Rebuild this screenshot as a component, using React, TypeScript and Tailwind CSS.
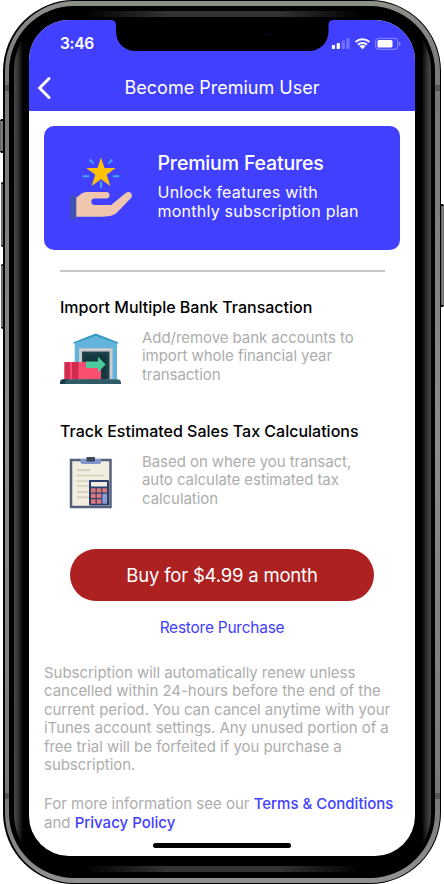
import type { ReactNode } from "react";

function SideButton({ className }: { className: string }) {
  return (
    <div
      className={`shrink-0 border-y-2 border-black bg-gradient-to-r from-[#555] via-[#858585] to-[#666] ${className}`}
    />
  );
}

function Sheen() {
  return <div className="h-[6px] w-[277px] shrink-0 bg-[linear-gradient(90deg,#000,#333_30%,#333_70%,#000)]" />;
}

function Notch() {
  return (
    <svg className="absolute left-[81px] top-0" width="224" height="32" viewBox="0 0 224 32">
      <path d="M0 0H224C220 0 218.500 1.500 218.500 6V11C218.500 23 210 31 199 31H26C14 31 6 23 6 11V6C6 1.500 4.500 0 0 0Z" fill="#000" />
      <path d="M156.500 13.500q-1.500 .5-1 2.500M159.500 13q1.500 .5 1 2.500" stroke="#08104c" fill="none" />
    </svg>
  );
}

function StatusIcons() {
  return (
    <svg width="72" height="16" viewBox="331 36 72 16" className="shrink-0">
      <g fill="#fff">
        <rect x="331.800" y="45" width="3.200" height="4" rx=".8" />
        <rect x="336.700" y="43" width="3.200" height="6" rx=".8" />
        <rect x="341.700" y="40.500" width="3.200" height="8.500" rx=".8" opacity=".25" />
        <rect x="346.300" y="38" width="3.200" height="11" rx=".8" opacity=".25" />
        <path d="M362.500 49.300l-3-3a4.200 4.200 0 0 1 6 0z" />
        <rect x="377.500" y="40" width="15" height="7.600" rx="1.500" />
        <path d="M399 42c2 .5 2 3.300 0 3.800z" opacity=".45" />
      </g>
      <g fill="none" stroke="#fff" strokeWidth="2.200">
        <path d="M355.600 42a10 10 0 0 1 13.800 0" />
        <path d="M358.100 44.800a6.300 6.300 0 0 1 8.800 0" />
      </g>
      <rect x="375.700" y="38.300" width="22" height="11" rx="2.800" fill="none" stroke="#fff" opacity=".4" />
    </svg>
  );
}

function StarHand() {
  return (
    <svg width="64" height="64" viewBox="69 156 64 64" className="shrink-0">
      <path d="M89.500 159.500l4 4M112.500 159.500l-4 4M82.700 176.200h6.500M112.700 176.200h6.500M101 181.500v6.300" stroke="#42a5f5" strokeWidth="2" />
      <path d="M101 157.500l3.500 10.500h11.200l-9 6.700 3.700 11.200-9.400-6.700-9.400 6.700 3.700-11.200-9-6.700h11.200z" fill="#ffc107" />
      <path d="M76 197.500C80 196 81 192 87 192h19.300a3.200 3.200 0 0 1 0 6.400H94.700a3.300 3.300 0 0 0 0 6.600h16.500L126 192.700c4.500-2.500 7.500 2 5 5.300L117.500 212c-4 4.300-11 4.700-17 4.700H76z" fill="#f0c6af" />
      <rect x="70" y="195.500" width="6.300" height="23.500" fill="#3f51b5" />
    </svg>
  );
}

function WarehouseIcon() {
  return (
    <svg width="62" height="52" viewBox="60 333 62 52" className="-mb-px shrink-0">
      <path d="M74.700 343l21-8.500 21.300 8.500v36.500H74.700z" fill="#62b4dc" />
      <path d="M73.500 343.800v-1.500l22.200-8.800 22.300 8.800v1.500l-22.300-8z" fill="#3298c2" />
      <path d="M79 348.300h33.500v31.200H79z" fill="#ccc" />
      <path d="M82 351.500h27.500v28H82z" fill="#1c424c" />
      <path d="M84.500 354.500h22v25h-22z" fill="#153740" />
      <path d="M64.500 362h36.500v17.500H64.500z" fill="#fa5070" />
      <path d="M64.500 362h5.500v17.500h-5.500zM72 362h6.500v17.500H72z" fill="#d22a50" />
      <path d="M86 361.500h12v-4.800l7.700 7.700-7.700 7.700v-4.200H86z" fill="#4fca9a" />
      <path d="M60 384v-1.500q.5-3.200 4-3.200h53q3.500 0 4 3.200v1.500z" fill="#305c69" />
      <path d="M60 384v-1.500q.5-3.200 4-3.200h4q-3 1.500-3 4.700z" fill="#173f4b" />
    </svg>
  );
}

function ClipboardIcon() {
  return (
    <svg width="62" height="52" viewBox="60 457 62 52" className="-mb-px shrink-0">
      <rect x="71" y="460" width="39.500" height="47" fill="#f1eedf" stroke="#55617b" strokeWidth="2.500" />
      <path d="M77 470.200h13M77 475.500h27M77 481h13M77 486h12M77 492.200h12M77 497.300h12" stroke="#d2cfb7" strokeWidth="1.700" />
      <path d="M80.500 459h20.500v3.300q0 1.700-2 1.700H82.500q-2 0-2-1.700z" fill="#8494cc" />
      <rect x="86.500" y="457" width="8.500" height="4.500" rx=".6" fill="#3d4858" />
      <rect x="89" y="480" width="20" height="25.500" rx="1" fill="#29406f" />
      <path d="M91 482h16v4.500H91z" fill="#f1eedf" />
      <path d="M91 488.200h4.600v4.400H91zm5.700 0h4.600v4.400h-4.600zm5.700 0h4.600v4.400h-4.600zM91 493.700h4.600v4.400H91zm5.700 0h4.600v4.400h-4.600zM91 499.300h4.600v4.400H91zm5.700 0h4.600v4.400h-4.600z" fill="#dd7778" />
      <path d="M102.400 493.700h4.600v10h-4.600z" fill="#8c9cd5" />
    </svg>
  );
}

function Feature({ title, icon, children }: { title: string; icon: ReactNode; children: ReactNode }) {
  return (
    <section className="flex flex-col gap-[11px]">
      <h3 className="whitespace-nowrap text-[16px] font-medium leading-[22px] text-black">{title}</h3>
      <div className="flex h-[55px] items-end gap-5">
        {icon}
        <p className="whitespace-nowrap text-[15px] leading-[18.400px] tracking-[-0.06px] text-[#adadad]">{children}</p>
      </div>
    </section>
  );
}

export default function App() {
  return (
    <div className="flex h-[884px] w-[444px] overflow-hidden bg-white font-['Inter','Liberation_Sans',sans-serif]">
      <div className="flex w-[3px] shrink-0 flex-col items-end pt-[119px]">
        <SideButton className="mb-[29px] h-[34px] w-[3px] rounded-l-[2px]" />
        <div className="flex flex-col gap-[17px]">
          <SideButton className="h-[65px] w-[2px] rounded-l-[2px]" />
          <SideButton className="h-[65px] w-[2px] rounded-l-[2px]" />
        </div>
      </div>

      <div className="h-[884px] w-[438px] shrink-0 rounded-[71px] bg-black px-[1.500px] py-[1px]">
        <div className="h-full rounded-[70px] bg-[linear-gradient(#8c928a,#858585_26px,#777_84px,#555_84px,#555_90px,#777_90px,#8b8b8b_50%,#777_792px,#555_792px,#555_798px,#777_798px,#929292)] px-[4.500px] py-[5px]">
          <div className="h-full rounded-[65px] bg-black px-[4.500px] py-[4px]">
            <div className="flex h-full flex-col items-center gap-[3px] rounded-[60px] bg-[linear-gradient(#000,transparent_48px,transparent_816px,#000),linear-gradient(90deg,#484848,#333_4px,#151515_7px,#000_9px,#000_408px,#151515_410px,#333_413px,#484848)] pt-[1px]">
              <Sheen />
              <div className="relative flex h-[836px] w-[386px] shrink-0 flex-col overflow-hidden rounded-[40px] bg-white">
                <Notch />
                <header className="flex h-[90.500px] shrink-0 flex-col bg-[#4240ff] text-white">
                  <div className="flex h-[48px] items-center justify-between pl-[31px] pr-[12px]">
                    <span className="text-[15.500px] font-semibold leading-5 tracking-[-0.3px]">3:46</span>
                    <StatusIcons />
                  </div>
                  <div className="grid h-[40px] grid-cols-[40px_1fr_40px] items-center">
                    <svg width="24" height="26" viewBox="0 0 24 26" className="ml-[6px]">
                      <path d="M14 3.500L4.700 13L14 22.500" fill="none" stroke="#fff" strokeWidth="3" strokeLinecap="round" strokeLinejoin="miter" />
                    </svg>
                    <h1 className="whitespace-nowrap text-center text-[18px] font-normal leading-6">Become Premium User</h1>
                  </div>
                </header>

                <main className="flex flex-col gap-5 px-[15px] pt-[15.500px]">
                  <div className="flex h-[124px] items-center gap-[24.500px] rounded-[10px] bg-[#4240ff] pl-[25px] text-white">
                    <StarHand />
                    <div className="flex flex-col gap-[7px] whitespace-nowrap pb-[6px]">
                      <h2 className="text-[19.500px] font-medium leading-[26px] tracking-[-0.15px]">Premium Features</h2>
                      <p className="text-[16px] leading-[19px] tracking-[0.240px]">
                        Unlock features with<br />monthly subscription plan
                      </p>
                    </div>
                  </div>

                  <div className="ml-4 mr-[15px] h-[1.500px] bg-[#c8c8c8]" />

                  <div className="flex flex-col gap-9 px-4 pt-[4.500px]">
                    <Feature title="Import Multiple Bank Transaction" icon={<WarehouseIcon />}>
                      Add/remove bank accounts to<br />import whole financial year<br />transaction
                    </Feature>
                    <Feature title="Track Estimated Sales Tax Calculations" icon={<ClipboardIcon />}>
                      Based on where you transact,<br />auto calculate estimated tax<br />calculation
                    </Feature>
                  </div>

                  <div className="flex flex-col items-center gap-[17px] pt-[21px]">
                    <button className="flex h-[52px] w-[304px] items-center justify-center rounded-full bg-[#ad2121] pt-[2px] text-[18.500px] tracking-[-0.2px] text-white">
                      Buy for $4.99 a month
                    </button>
                    <a className="text-[15.500px] leading-5 tracking-[-0.250px] text-[#4240ff]">Restore Purchase</a>
                  </div>

                  <div className="flex flex-col gap-[21px] whitespace-nowrap pt-[6px] text-[15px] leading-[18.400px] text-[#adadad]">
                    <p className="tracking-[-0.04px]">
                      Subscription will automatically renew unless<br />
                      cancelled within 24-hours before the end of the<br />
                      current period. You can cancel anytime with your<br />
                      iTunes account settings. Any unused portion of a<br />
                      free trial will be forfeited if you purchase a<br />
                      subscription.
                    </p>
                    <p>
                      For more information see our <a className="font-medium text-[#4240ff]">Terms &amp; Conditions</a><br />
                      and <a className="font-medium text-[#4240ff]">Privacy Policy</a>
                    </p>
                  </div>
                </main>
                <div className="absolute inset-x-0 bottom-[8px] mx-auto h-[5px] w-[138px] rounded-full bg-black" />
              </div>
              <div className="pt-[7px]"><Sheen /></div>
            </div>
          </div>
        </div>
      </div>

      <div className="flex w-[3px] shrink-0 flex-col pt-[204px]">
        <SideButton className="h-[103px] w-[3px] rounded-r-[2px]" />
      </div>
    </div>
  );
}
